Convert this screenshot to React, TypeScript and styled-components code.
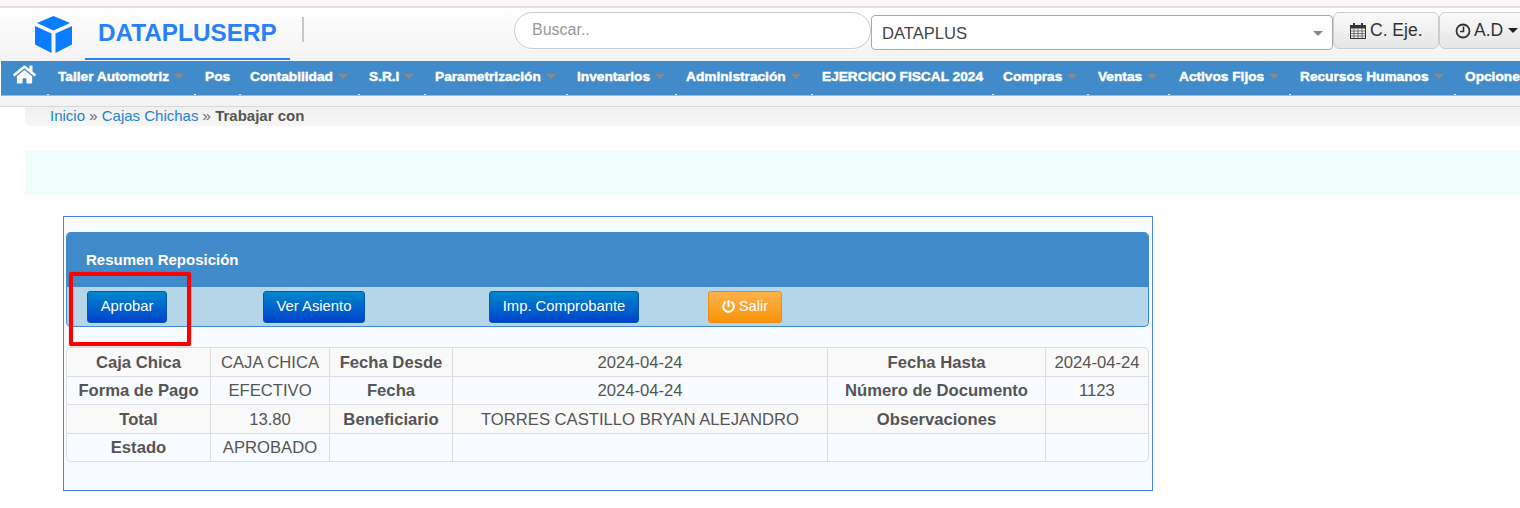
import React from "react";
import styled, { createGlobalStyle } from "styled-components";
import { FaHome, FaPowerOff } from "react-icons/fa";

const Global = createGlobalStyle`
  html, body { margin: 0; padding: 0; background: #fff; overflow: hidden; }
  body { font-family: "Liberation Sans", Arial, sans-serif; color: #555; }
  * { box-sizing: border-box; }
`;

const Page = styled.div`
  width: 1520px;
  height: 508px;
  overflow: hidden;
`;
const TopStrip = styled.div`
  height: 8px;
  background: #fff5f7;
  border-bottom: 2px solid #e3dcdd;
`;
const Header = styled.header`
  height: 53px;
  display: flex;
  background: linear-gradient(#ffffff, #f3f3f3);
  align-items: flex-start;
`;
const Brand = styled.div`
  flex: none;
  width: 290px;
  height: 52px;
  padding-left: 35px;
  display: flex;
  align-items: flex-start;
`;
const LogoWrap = styled.div`
  padding-top: 8px;
  width: 50px;
  svg { display: block; }
`;
const Title = styled.div`
  margin-top: 0;
  width: 205px;
  height: 52px;
  padding: 11px 0 0 13px;
  border-bottom: 2px solid #2a80f5;
  color: #2a80f5;
  font-size: 24.3px;
  line-height: 28px;
  font-weight: 700;
  white-space: nowrap;
`;
const Divider = styled.div`
  flex: none;
  width: 2px;
  height: 25px;
  margin: 9px 210px 0 12px;
  background: #c8c8c8;
`;
const Search = styled.div`
  flex: none;
  width: 357px;
  height: 37px;
  margin-top: 4px;
  border: 1px solid #ccc;
  border-radius: 19px;
  background: #fff;
  color: #999;
  font-size: 16px;
  line-height: 34px;
  padding-left: 17px;
`;
const Select = styled.div`
  flex: none;
  position: relative;
  width: 462px;
  height: 35px;
  margin-top: 7px;
  border: 1px solid #aaa;
  border-radius: 4px;
  background: #fff;
  color: #444;
  font-size: 16.6px;
  line-height: 35px;
  padding-left: 10px;
  &::after {
    content: "";
    position: absolute;
    right: 9px;
    top: 15px;
    border-left: 5px solid transparent;
    border-right: 5px solid transparent;
    border-top: 5px solid #888;
  }
`;
const Btn = styled.div<{ $w: number }>`
  width: ${(p) => p.$w}px;
  flex: none;
  height: 37px;
  margin-top: 4px;
  display: flex;
  align-items: center;
  gap: 3px;
  padding-left: 15px;
  border: 1px solid #ccc;
  border-radius: 6px;
  background: linear-gradient(#fafafa, #e6e6e6);
  color: #333;
  font-size: 17.5px;
  white-space: nowrap;
`;
const Caret = styled.span`
  margin-left: 2px;
  border-left: 5px solid transparent;
  border-right: 5px solid transparent;
  border-top: 5px solid #222;
`;
const Nav = styled.nav`
  margin-left: 1px;
  height: 35px;
  display: flex;
  background: #428bca;
  border-bottom: 1px solid #8fbce0;
  white-space: nowrap;
  overflow: hidden;
`;
const HomeItem = styled.div`
  flex: none;
  width: 46px;
  padding: 2px 0 0 12px;
  color: #fff;
  font-size: 23px;
  line-height: 0;
`;
const NavItem = styled.div<{ $w: number }>`
  position: relative;
  flex: none;
  width: ${(p) => p.$w}px;
  padding: 8px 0 0 11px;
  display: flex;
  align-items: flex-start;
  gap: 5px;
  color: #fff;
  font-size: 13.7px;
  line-height: 15px;
  font-weight: 700;
  -webkit-text-stroke: 0.45px #fff;
  &::before {
    content: "";
    position: absolute;
    left: 0;
    bottom: 0;
    width: 2px;
    height: 1px;
    background: #e6eef6;
  }
`;
const NavCaret = styled.span`
  margin-top: 5px;
  border-left: 5px solid transparent;
  border-right: 5px solid transparent;
  border-top: 5px solid #8a8a8a;
`;
const SubBar = styled.div`
  height: 11px;
  background: #f3f3f3;
  border-bottom: 1px solid #d8d8d8;
`;
const Crumbs = styled.div`
  margin-left: 25px;
  height: 19px;
  padding-left: 25px;
  background: linear-gradient(#f0f0f0, #f7f7f7);
  border-bottom-left-radius: 5px;
  font-size: 15px;
  line-height: 18px;
  color: #666;
  a { color: #1f83c6; text-decoration: none; }
  b { color: #555; }
`;
const Notice = styled.div`
  margin: 25px 0 21px 25px;
  height: 44px;
  background: #effdfd;
`;
const Panel = styled.section`
  position: relative;
  margin-left: 63px;
  width: 1090px;
  height: 275px;
  padding: 15px 3px 0 2px;
  border: 1px solid #4a82e4;
  background: #f8fbff;
`;
const PanelBox = styled.div`
  border: 1px solid #428bca;
  border-top: 0;
  border-radius: 5px;
  overflow: hidden;
  background: #b5d5e8;
`;
const PanelHead = styled.div`
  height: 55px;
  background: #428bca;
  color: #fff;
  font-size: 15px;
  font-weight: 700;
  line-height: 55px;
  padding-left: 19px;
`;
const Toolbar = styled.div`
  height: 39px;
  padding: 4px 0 0 20px;
  display: flex;
`;
const ActionButton = styled.div<{ $w: number; $after: number; $warn?: boolean }>`
  width: ${(p) => p.$w}px;
  margin-right: ${(p) => p.$after}px;
  height: 32px;
  padding-bottom: 2px;
  border-radius: 3px;
  border: 1px solid ${(p) => (p.$warn ? "#e98d17" : "#0a55ac")};
  background: ${(p) =>
    p.$warn ? "linear-gradient(#ffb14d, #f89406)" : "linear-gradient(#0088cc, #0044cc)"};
  color: #fff;
  font-size: 14.8px;
  display: flex;
  align-items: center;
  justify-content: center;
  gap: 4px;
`;
const InfoTable = styled.table`
  width: 1083px;
  margin-top: 20px;
  border-collapse: separate;
  border-spacing: 0;
  table-layout: fixed;
  border: 1px solid #ddd;
  border-radius: 5px;
  font-size: 16.65px;
  tr:nth-child(odd) td, tr:nth-child(odd) th { background: #f9f9f9; padding-top: 2px; }
  tr:nth-child(3) td, tr:nth-child(3) th { height: 29px; }
  tr:first-child th:first-child { border-top-left-radius: 5px; }
  tr:first-child td:last-child { border-top-right-radius: 5px; }
`;
const Col = styled.col<{ $w: number }>`
  width: ${(p) => p.$w}px;
`;
const Th = styled.th`
  height: 28px;
  padding: 0;
  text-align: center;
  font-weight: 700;
  color: #555;
  white-space: nowrap;
  border-left: 1px solid #ddd;
  border-top: 1px solid #ddd;
  tr:first-child & { border-top: 0; }
  &:first-child { border-left: 0; }
`;
const Td = styled.td`
  height: 28px;
  padding: 0;
  text-align: center;
  color: #555;
  white-space: nowrap;
  border-left: 1px solid #ddd;
  border-top: 1px solid #ddd;
  tr:first-child & { border-top: 0; }
`;
const Highlight = styled.div`
  position: absolute;
  left: 5px;
  top: 55px;
  width: 122px;
  height: 74px;
  border: 4px solid #f00;
  border-radius: 2px;
  box-shadow: 0 0 1px #f00;
`;

const CubeLogo = () => (
  <svg width="37" height="37" viewBox="0 0 37 37" fill="#0a7cff">
    <polygon points="18.5,0 35,7 18.5,14.5 2,7" />
    <polygon points="0,10 16.5,17.5 16.5,37 0,28.5" />
    <polygon points="37,10 20.5,17.5 20.5,37 37,28.5" />
  </svg>
);
const CalendarIcon = () => (
  <svg width="18" height="18" viewBox="0 0 18 18" fill="none" stroke="#333">
    <rect x="1.5" y="3.5" width="15" height="13" strokeWidth="1" />
    <rect x="1.5" y="3.5" width="15" height="3" fill="#333" stroke="none" />
    <rect x="4" y="1" width="2" height="4" fill="#333" stroke="none" />
    <rect x="12" y="1" width="2" height="4" fill="#333" stroke="none" />
    <path d="M1.5 9h15M1.5 11.5h15M1.5 14h15M5 6.5v10M9 6.5v10M13 6.5v10" strokeWidth="0.6" />
  </svg>
);
const ClockIcon = () => (
  <svg width="16" height="16" viewBox="0 0 16 16" fill="none" stroke="#333">
    <circle cx="8" cy="8" r="6.5" strokeWidth="1.8" />
    <path d="M8.5 3.5v5H5" strokeWidth="1.6" />
  </svg>
);

const menu: [string, number, boolean][] = [
  ["Taller Automotriz", 147, true],
  ["Pos", 45, false],
  ["Contabilidad", 119, true],
  ["S.R.I", 66, true],
  ["Parametrización", 142, true],
  ["Inventarios", 109, true],
  ["Administración", 136, true],
  ["EJERCICIO FISCAL 2024", 181, false],
  ["Compras", 95, true],
  ["Ventas", 81, true],
  ["Activos Fijos", 121, true],
  ["Recursos Humanos", 165, true],
  ["Opciones", 90, true],
];

const rows: string[][] = [
  ["Caja Chica", "CAJA CHICA", "Fecha Desde", "2024-04-24", "Fecha Hasta", "2024-04-24"],
  ["Forma de Pago", "EFECTIVO", "Fecha", "2024-04-24", "Número de Documento", "1123"],
  ["Total", "13.80", "Beneficiario", "TORRES CASTILLO BRYAN ALEJANDRO", "Observaciones", ""],
  ["Estado", "APROBADO", "", "", "", ""],
];
const cols = [143, 119, 123, 375, 218, 103];

export default function App() {
  return (
    <Page>
      <Global />
      <TopStrip />
      <Header>
        <Brand>
          <LogoWrap>
            <CubeLogo />
          </LogoWrap>
          <Title>DATAPLUSERP</Title>
        </Brand>
        <Divider />
        <Search>Buscar..</Search>
        <Select>DATAPLUS</Select>
        <Btn $w={106}>
          <CalendarIcon />
          C. Eje.
        </Btn>
        <Btn $w={100}>
          <ClockIcon />
          A.D
          <Caret />
        </Btn>
      </Header>
      <Nav>
        <HomeItem>
          <FaHome />
        </HomeItem>
        {menu.map(([label, w, caret]) => (
          <NavItem key={label} $w={w}>
            {label}
            {caret && <NavCaret />}
          </NavItem>
        ))}
      </Nav>
      <SubBar />
      <Crumbs>
        <a>Inicio</a> » <a>Cajas Chichas</a> » <b>Trabajar con</b>
      </Crumbs>
      <Notice />
      <Panel>
        <PanelBox>
          <PanelHead>Resumen Reposición</PanelHead>
          <Toolbar>
            <ActionButton $w={80} $after={96}>Aprobar</ActionButton>
            <ActionButton $w={102} $after={124}>Ver Asiento</ActionButton>
            <ActionButton $w={150} $after={69}>Imp. Comprobante</ActionButton>
            <ActionButton $w={74} $after={0} $warn>
              <FaPowerOff size={13} />
              Salir
            </ActionButton>
          </Toolbar>
        </PanelBox>
        <InfoTable>
          <colgroup>
            {cols.map((w, i) => (
              <Col key={i} $w={w} />
            ))}
          </colgroup>
          <tbody>
            {rows.map((r) => (
              <tr key={r[0]}>
                <Th>{r[0]}</Th>
                <Td>{r[1]}</Td>
                <Th>{r[2]}</Th>
                <Td>{r[3]}</Td>
                <Th>{r[4]}</Th>
                <Td>{r[5]}</Td>
              </tr>
            ))}
          </tbody>
        </InfoTable>
        <Highlight />
      </Panel>
    </Page>
  );
}
